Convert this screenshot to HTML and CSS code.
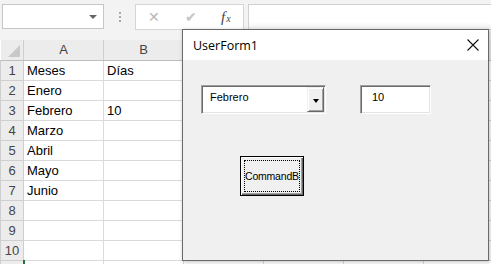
FILE: index.html
```html
<!DOCTYPE html>
<html lang="es">
<head>
  <meta charset="UTF-8" />
  <title>UserForm1</title>
  <link rel="stylesheet" href="styles.css">
</head>
<body>
  <div class="toolbar">
    <div class="name-box"><span class="name-arrow"></span></div>
    <div class="grip"><span></span><span></span><span></span></div>
    <div class="fx-buttons">
      <span class="fx-cancel">&#x2715;</span>
      <span class="fx-ok">&#x2714;</span>
      <span class="fx-fx"><i>f</i><i class="fx-x">x</i></span>
    </div>
    <div class="formula-input"></div>
  </div>

  <table class="sheet">
    <colgroup>
      <col class="col-rh"><col class="col"><col class="col"><col class="col"><col class="col"><col class="col"><col class="col">
    </colgroup>
    <!-- columns C..F sit under the form, their letters are hidden -->
    <tr class="head">
      <th class="corner"><span class="corner-tri"></span></th>
      <th>A</th><th>B</th><th></th><th></th><th></th><th></th>
    </tr>
    <tr><th>1</th><td>Meses</td><td>Días</td><td></td><td></td><td></td><td></td></tr>
    <tr><th>2</th><td>Enero</td><td></td><td></td><td></td><td></td><td></td></tr>
    <tr><th>3</th><td>Febrero</td><td>10</td><td></td><td></td><td></td><td></td></tr>
    <tr><th>4</th><td>Marzo</td><td></td><td></td><td></td><td></td><td></td></tr>
    <tr><th>5</th><td>Abril</td><td></td><td></td><td></td><td></td><td></td></tr>
    <tr><th>6</th><td>Mayo</td><td></td><td></td><td></td><td></td><td></td></tr>
    <tr><th>7</th><td>Junio</td><td></td><td></td><td></td><td></td><td></td></tr>
    <tr><th>8</th><td></td><td></td><td></td><td></td><td></td><td></td></tr>
    <tr><th>9</th><td></td><td></td><td></td><td></td><td></td><td></td></tr>
    <tr><th>10</th><td></td><td></td><td></td><td></td><td></td><td></td></tr>
    <tr><th class="row-sel"></th><td></td><td></td><td></td><td></td><td></td><td></td></tr>
  </table>

  <div class="userform">
    <div class="uf-title">
      <span>UserForm1</span>
      <svg class="uf-close" width="12" height="12" viewBox="0 0 12 12">
        <path d="M0.5 0.5 L11.5 11.5 M11.5 0.5 L0.5 11.5" stroke="#111" stroke-width="1.1" fill="none"/>
      </svg>
    </div>
    <div class="uf-body">
      <div class="uf-row">
        <div class="combo">
          <span class="combo-text">Febrero</span>
          <span class="combo-btn"><span class="combo-arrow"></span></span>
        </div>
        <div class="textbox">10</div>
      </div>
      <div class="cmd-btn"><div class="cmd-focus">CommandB</div></div>
    </div>
  </div>
</body>
</html>
```

FILE: styles.css
```css
* {
  margin: 0;
  padding: 0;
  box-sizing: border-box;
}

body {
  width: 491px;
  height: 264px;
  overflow: hidden;
  background: #fff;
  font-family: 'Liberation Sans', Arial, sans-serif;
  position: relative;
}

.toolbar {
  height: 40px;
  background: #f3f3f3;
  display: flex;
  align-items: flex-start;
  padding: 4px 0 0 2px;
}

.name-box {
  width: 102px;
  height: 25px;
  background: #fff;
  border: 1px solid #c6c6c6;
  position: relative;
}

.name-arrow {
  position: absolute;
  right: 6px;
  top: 10px;
  border-left: 4px solid transparent;
  border-right: 4px solid transparent;
  border-top: 4px solid #666;
}

.grip {
  width: 31px;
  height: 25px;
  display: flex;
  flex-direction: column;
  align-items: center;
  justify-content: center;
  gap: 2px;
}

.grip span {
  width: 2px;
  height: 2px;
  background: #aaa;
}

.fx-buttons {
  width: 109px;
  height: 26px;
  background: #fff;
  border: 1px solid #d6d6d6;
  display: flex;
  align-items: center;
  padding-left: 12px;
}

.fx-cancel {
  color: #b8b8b8;
  font-size: 14px;
  width: 37px;
}

.fx-ok {
  color: #c4c4c4;
  font-size: 14px;
  width: 36px;
}

.fx-fx {
  color: #444;
  font-family: 'Liberation Serif', serif;
  font-size: 15px;
}

.fx-x {
  font-size: 10px;
  margin-left: 1px;
}

.formula-input {
  flex: 1;
  height: 26px;
  margin-left: 4px;
  background: linear-gradient(#fff 70%, #f0f0f0);
  border: 1px solid #d0d0d0;
  border-right: none;
}

.sheet {
  border-collapse: collapse;
  table-layout: fixed;
  width: 503px;
}

.col-rh {
  width: 23px;
}

.col {
  width: 80px;
}

.sheet tr {
  height: 20px;
}

.sheet th {
  background: #ececec;
  color: #444;
  font-weight: normal;
  font-size: 13px;
  border: 1px solid #cfcfcf;
  text-align: center;
  padding: 0;
}

.sheet .head th {
  border-top: none;
  border-bottom-color: #bdbdbd;
}

.sheet td {
  border: 1px solid #dadada;
  font-size: 13px;
  color: #000;
  padding: 0 0 0 3px;
  white-space: nowrap;
  overflow: hidden;
}

.sheet .row-sel {
  border-right: 2px solid #217346;
}

.sheet .corner {
  position: relative;
  border-left: none;
}

.corner-tri {
  position: absolute;
  right: 3px;
  bottom: 3px;
  border-left: 12px solid transparent;
  border-bottom: 12px solid #c8c8c8;
}

.userform {
  position: absolute;
  left: 182px;
  top: 29px;
  width: 307px;
  height: 232px;
  border: 1px solid #6a6a6a;
  background: #f0f0f0;
  box-shadow: 1px 1px 4px rgba(0, 0, 0, 0.25);
}

.uf-title {
  height: 30px;
  background: #fff;
  display: flex;
  align-items: center;
  justify-content: space-between;
  padding: 0 9px 0 10px;
  font-family: 'Open Sans', 'Noto Sans', sans-serif;
  font-size: 12.5px;
  color: #000;
}

.uf-body {
  padding: 25px 0 0 18px;
  font-family: 'Liberation Sans', Arial, sans-serif;
  font-size: 11px;
  color: #000;
}

.uf-row {
  display: flex;
  gap: 34px;
}

.combo,
.textbox {
  height: 29px;
  background: #fff;
  border: 1px solid;
  border-color: #a0a0a0 #fff #fff #a0a0a0;
  box-shadow: inset 1px 1px #696969, inset -1px -1px #e3e3e3;
}

.combo {
  width: 125px;
  display: flex;
  justify-content: space-between;
}

.combo-text {
  padding: 5px 0 0 8px;
}

.combo-btn {
  width: 17px;
  margin: 1px 1px 1px 0;
  background: #f0f0f0;
  border: 1px solid;
  border-color: #f0f0f0 #696969 #696969 #f0f0f0;
  box-shadow: inset 1px 1px #fff, inset -1px -1px #a0a0a0;
  display: flex;
  justify-content: center;
  align-items: center;
}

.combo-arrow {
  border-left: 3.5px solid transparent;
  border-right: 3.5px solid transparent;
  border-top: 4px solid #000;
  margin-top: 2px;
}

.textbox {
  width: 71px;
  padding: 5px 0 0 11px;
}

.cmd-btn {
  width: 64px;
  height: 40px;
  margin: 42px 0 0 39px;
  border: 1px solid #000;
  background: #f0f0f0;
  box-shadow: inset 1px 1px #fff, inset -1px -1px #696969, inset -2px -2px #a0a0a0;
  padding: 3px;
}

.cmd-focus {
  height: 100%;
  border: 1px dotted #000;
  display: flex;
  align-items: center;
  font-size: 10.5px;
  letter-spacing: -0.2px;
  white-space: nowrap;
  overflow: hidden;
}
```
